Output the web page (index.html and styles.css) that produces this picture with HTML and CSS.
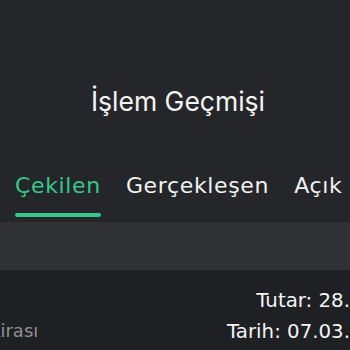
FILE: index.html
```html
<!DOCTYPE html>
<html lang="tr">
<head>
<meta charset="utf-8">
<link rel="stylesheet" href="styles.css">
</head>
<body>
<div class="page">
  <header class="header">
    <h1 class="title">İşlem Geçmişi</h1>
  </header>
  <nav class="tabs">
    <div class="tab active">Çekilen</div>
    <div class="tab">Gerçekleşen</div>
    <div class="tab">Açık İşlemler</div>
  </nav>
  <div class="band"></div>
  <div class="list">
    <div class="item">
      <div class="item-left">
        <span class="item-name">Kasa Kirası</span>
      </div>
      <div class="item-right">
        <span class="line">Tutar: 28.<span class="rest">500 TL</span></span>
        <span class="line">Tarih: 07.03.<span class="rest">2024</span></span>
      </div>
    </div>
  </div>
</div>
</body>
</html>
```

FILE: styles.css
```css
* { box-sizing: border-box; margin: 0; padding: 0; }
html, body { width: 350px; height: 350px; overflow: hidden; background: #25262a; }
body { font-family: "Inter", "Liberation Sans", sans-serif; color: #f2f2f2; }
.page { display: flex; flex-direction: column; width: 350px; height: 350px; }
.header { height: 168px; display: flex; align-items: flex-start; justify-content: center; padding-top: 85px; }
.title { font-weight: 400; font-size: 26.5px; color: #f4f4f4; padding-left: 6px; }
.tabs { display: flex; gap: 25px; padding-left: 15px; height: 54px; white-space: nowrap; font-family: "DejaVu Sans", sans-serif; font-size: 22px; letter-spacing: 0.65px; }
.tab { position: relative; height: 49px; display: flex; align-items: flex-start; padding-top: 5px; color: #f2f2f2; }
.tab.active { color: #35c88b; }
.tab.active::after { content: ""; position: absolute; left: 0; right: 0; bottom: 0; height: 4px; border-radius: 2px; background: #35c88b; }
.band { height: 48px; background: #303134; box-shadow: 0 2px 3px rgba(0,0,0,0.35); }
.list { flex: 1; background: #1f2024; overflow: hidden; }
.item { display: flex; justify-content: space-between; margin-left: -60px; padding-top: 19px; font-family: "DejaVu Sans", sans-serif; }
.item-left { display: flex; align-items: flex-end; padding-bottom: 2px; }
.item-name { font-size: 18px; color: #8f9095; }
.item-right { display: flex; flex-direction: column; align-items: flex-end; gap: 8px; }
.line { font-size: 19.8px; color: #f4f4f4; white-space: nowrap; }
.rest { display: inline-block; width: 0; overflow: hidden; vertical-align: bottom; }
```
